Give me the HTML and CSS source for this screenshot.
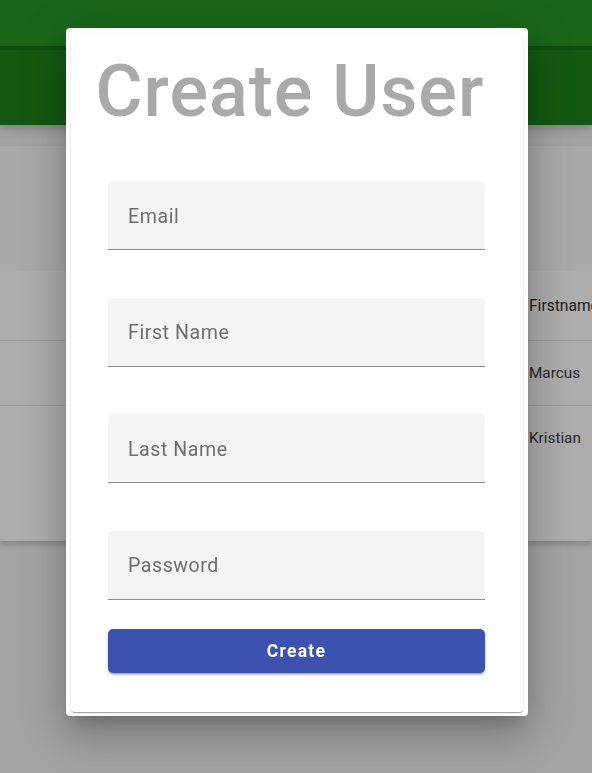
FILE: index.html
```html
<!DOCTYPE html>
<html lang="en">
<head>
<meta charset="utf-8">
<title>Create User</title>
<link rel="stylesheet" href="styles.css">
</head>
<body>
<div class="page">
  <header class="topbar"></header>
  <div class="subbar"></div>
  <main class="content">
    <section class="card">
      <div class="card-head"></div>
      <div class="table">
        <div class="row head"><div class="cell"></div><div class="cell">Firstname</div></div>
        <div class="row"><div class="cell"></div><div class="cell">Marcus</div></div>
        <div class="row last"><div class="cell"></div><div class="cell">Kristian</div></div>
      </div>
    </section>
  </main>
</div>

<div class="dialog">
  <div class="dialog-card">
    <h1 class="title">Create User</h1>
    <form class="form">
      <div class="field"><span class="label">Email</span></div>
      <div class="field"><span class="label">First Name</span></div>
      <div class="field"><span class="label">Last Name</span></div>
      <div class="field"><span class="label">Password</span></div>
      <button type="button" class="btn">Create</button>
    </form>
  </div>
</div>
</body>
</html>
```

FILE: styles.css
```css
html, body {
  margin: 0;
  padding: 0;
  height: 100%;
  overflow: hidden;
}
body {
  font-family: Roboto, "Liberation Sans", Arial, sans-serif;
  background: #a4a4a4;
}
.page {
  width: 100%;
}
.topbar {
  height: 46px;
  background: #19661a;
  border-bottom: 4px solid #0f500f;
}
.subbar {
  height: 75px;
  background: #135811;
  box-shadow: 0 4px 10px rgba(0,0,0,0.22);
  position: relative;
}
.content {
  padding-top: 21px;
}
.card {
  background: #adadad;
  height: 395px;
  box-shadow: 0 3px 6px rgba(0,0,0,0.2);
}
.card-head {
  height: 125px;
  background: #a9a9a9;
}
.table {
  display: flex;
  flex-direction: column;
}
.row {
  display: grid;
  grid-template-columns: 529px 1fr;
  height: 64px;
  align-items: center;
  border-bottom: 1px solid #9a9a9a;
  font-size: 15.3px;
  color: #262626;
  white-space: nowrap;
}
.row.head {
  height: 69px;
  font-size: 15.6px;
  color: #1a1a1a;
}
.row.last {
  border-bottom: none;
}

.dialog {
  position: fixed;
  left: 66px;
  top: 28px;
  width: 462px;
  height: 688px;
  box-sizing: border-box;
  padding: 7px 5px 4px 5px;
  background: #fff;
  border-radius: 4px;
  box-shadow: 0 11px 15px -7px rgba(0,0,0,.2), 0 24px 38px 3px rgba(0,0,0,.14), 0 9px 46px 8px rgba(0,0,0,.12);
}
.dialog-card {
  height: 100%;
  box-sizing: border-box;
  background: #fff;
  border-radius: 4px;
  box-shadow: 0 2px 1px -1px rgba(0,0,0,.2), 0 1px 1px 0 rgba(0,0,0,.14), 0 1px 3px 0 rgba(0,0,0,.12);
  padding: 15px 38px 0 37px;
}
.title {
  margin: 0 -20px;
  font-size: 72px;
  line-height: 84px;
  font-weight: 500;
  letter-spacing: 1px;
  color: #a9a9a9;
  text-align: center;
  white-space: nowrap;
  padding-right: 13px;
}
.form {
  margin-top: 47px;
  display: flex;
  flex-direction: column;
  gap: 47.5px;
}
.field {
  height: 69px;
  box-sizing: border-box;
  background: #f4f4f4;
  border-radius: 5px 5px 0 0;
  border-bottom: 1px solid #8c8c8c;
  display: flex;
  align-items: center;
  padding-left: 20px;
  padding-top: 2px;
}
.label {
  font-size: 19.6px;
  letter-spacing: 0.55px;
  color: #6e6e6e;
}
.btn {
  margin-top: -18.5px;
  height: 44px;
  border: none;
  border-radius: 5px;
  background: #3d52af;
  color: #fff;
  font-family: Roboto, "Liberation Sans", Arial, sans-serif;
  font-size: 17.5px;
  font-weight: 700;
  letter-spacing: 1.25px;
  padding-top: 2px;
  box-shadow: 0 3px 1px -2px rgba(0,0,0,.2), 0 2px 2px 0 rgba(0,0,0,.14), 0 1px 5px 0 rgba(0,0,0,.12);
}
```
